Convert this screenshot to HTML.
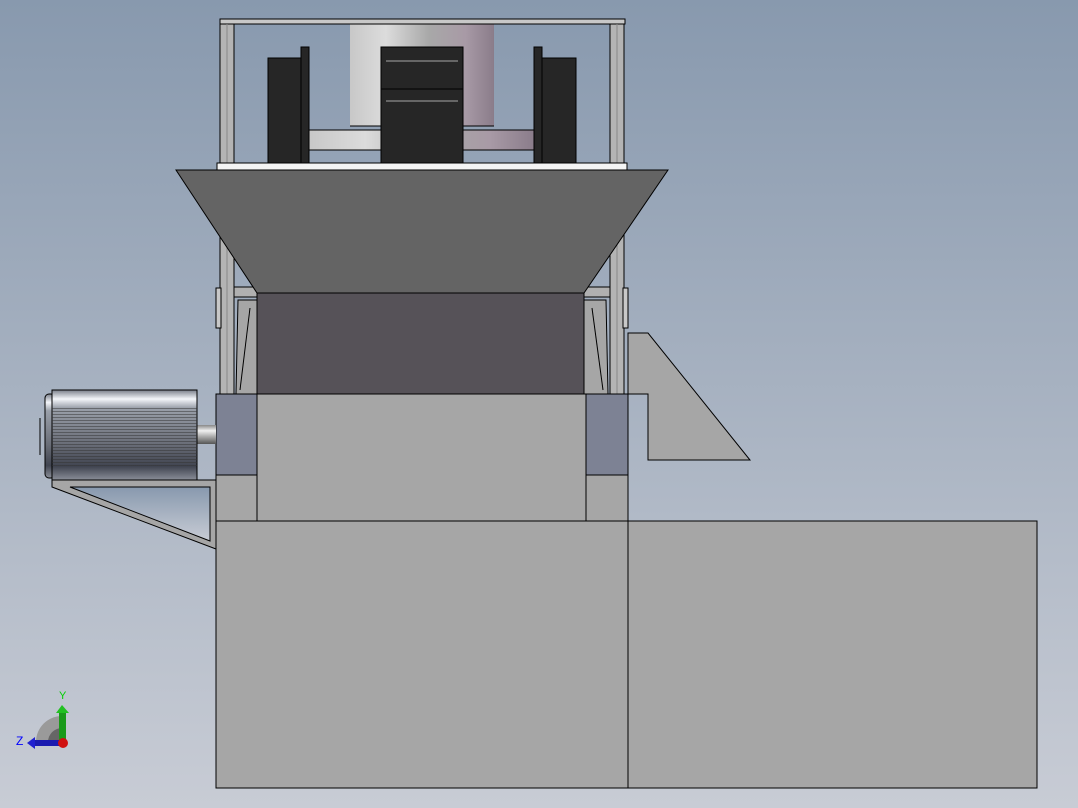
<!DOCTYPE html><html><head><style>html,body{margin:0;padding:0;width:1078px;height:808px;overflow:hidden}</style></head><body>
<svg width="1078" height="808" viewBox="0 0 1078 808" xmlns="http://www.w3.org/2000/svg">
<defs>
<linearGradient id="bg" x1="0" y1="0" x2="0" y2="1"><stop offset="0" stop-color="#8899ae"/><stop offset="1" stop-color="#c8ccd5"/></linearGradient>
<linearGradient id="cyl" x1="0" y1="0" x2="1" y2="0"><stop offset="0" stop-color="#c8c8c8"/><stop offset="0.25" stop-color="#dcdcdc"/><stop offset="0.55" stop-color="#a8a8a8"/><stop offset="0.8" stop-color="#a89aa6"/><stop offset="1" stop-color="#8a7c8a"/></linearGradient>
<linearGradient id="mot" x1="0" y1="0" x2="0" y2="1"><stop offset="0" stop-color="#7a7f8a"/><stop offset="0.1" stop-color="#f4f6fa"/><stop offset="0.2" stop-color="#9aa0aa"/><stop offset="0.6" stop-color="#6a6e78"/><stop offset="0.85" stop-color="#404450"/><stop offset="1" stop-color="#8a8e98"/></linearGradient>
<linearGradient id="shaft" x1="0" y1="0" x2="0" y2="1"><stop offset="0" stop-color="#888"/><stop offset="0.3" stop-color="#f0f0f0"/><stop offset="1" stop-color="#555"/></linearGradient>
<pattern id="ribs" width="4" height="3" patternUnits="userSpaceOnUse"><rect width="4" height="1" fill="#333" opacity="0.5"/></pattern>
</defs>
<rect width="1078" height="808" fill="url(#bg)"/>
<g stroke="#000" stroke-width="1">
<rect x="350" y="24" width="144" height="102" fill="url(#cyl)" stroke="none"/>
<line x1="350" y1="126" x2="494" y2="126"/>
<rect x="309" y="130" width="226" height="20" fill="url(#cyl)"/>
<rect x="220" y="19" width="405" height="5" fill="#c8c8c8"/>
<rect x="220" y="24" width="14" height="372" fill="#b4b4b4"/>
<line x1="227" y1="24" x2="227" y2="396" stroke="#888"/>
<rect x="610" y="24" width="14" height="372" fill="#b4b4b4"/>
<line x1="617" y1="24" x2="617" y2="396" stroke="#888"/>
<rect x="268" y="58" width="33" height="107" fill="#262626"/>
<rect x="301" y="47" width="8" height="118" fill="#262626"/>
<rect x="534" y="47" width="8" height="118" fill="#262626"/>
<rect x="542" y="58" width="34" height="107" fill="#262626"/>
<rect x="381" y="47" width="82" height="123" fill="#262626"/>
<line x1="381" y1="89" x2="463" y2="89"/>
<line x1="386" y1="61" x2="458" y2="61" stroke="#666" stroke-width="2"/>
<line x1="386" y1="101" x2="458" y2="101" stroke="#666" stroke-width="2"/>
<rect x="217" y="163" width="410" height="7" fill="#f4f4f4"/>
<!-- side brackets -->
<rect x="216" y="288" width="5" height="40" fill="#c8c8c8"/>
<rect x="623" y="288" width="5" height="40" fill="#c8c8c8"/>
<rect x="234" y="287" width="23" height="10" fill="#b0b0b0"/>
<rect x="584" y="287" width="26" height="10" fill="#b0b0b0"/>
<polygon points="238,300 257,300 257,394 236,394" fill="#a6a6a6"/>
<line x1="250" y1="308" x2="240" y2="390"/>
<polygon points="584,300 606,300 608,394 584,394" fill="#a6a6a6"/>
<line x1="592" y1="308" x2="603" y2="390"/>
<polygon points="628,333 648,333 750,460 648,460 648,394 628,394" fill="#a6a6a6"/>
<polygon points="176,170 668,170 584,293 257,293" fill="#646464"/>
<rect x="257" y="293" width="327" height="101" fill="#565258"/>
<rect x="216" y="394" width="412" height="127" fill="#a6a6a6"/>
<rect x="216" y="394" width="41" height="81" fill="#7d8294"/>
<rect x="586" y="394" width="42" height="81" fill="#7d8294"/>
<line x1="257" y1="394" x2="257" y2="521"/>
<line x1="586" y1="394" x2="586" y2="521"/>
<rect x="216" y="521" width="412" height="267" fill="#a6a6a6"/>
<rect x="628" y="521" width="409" height="267" fill="#a6a6a6"/>
<polygon points="52,480 216,480 216,549 52,487" fill="#a6a6a6"/>
<polygon points="70,487 210,487 210,541" fill="url(#bg)"/>
<rect x="197" y="425" width="19" height="19" fill="url(#shaft)" stroke="none"/>
<rect x="45" y="394" width="10" height="84" rx="4" fill="url(#mot)"/>
<rect x="52" y="390" width="145" height="90" fill="url(#mot)"/>
<rect x="52" y="407" width="145" height="60" fill="url(#ribs)" stroke="none"/>
<line x1="40" y1="418" x2="40" y2="455"/>
</g>
<path d="M36,742 A26,26 0 0 1 62,716 L62,742 Z" fill="#9a9a9a"/>
<path d="M48,742 A14,14 0 0 1 62,728 L62,742 Z" fill="#666"/>
<rect x="59" y="712" width="7" height="30" fill="#1a9a1a"/>
<polygon points="56,713 62,705 69,713" fill="#22c022"/>
<rect x="34" y="740" width="28" height="6" fill="#1a1ab0"/>
<polygon points="35,737 27,743 35,749" fill="#2020d0"/>
<circle cx="63" cy="743" r="5" fill="#d01010"/>
<text x="59" y="699" font-family="Liberation Sans,sans-serif" font-size="11" fill="#00d000">Y</text>
<text x="16" y="745" font-family="Liberation Sans,sans-serif" font-size="12" fill="#0000ff">Z</text>
</svg>
</body></html>
